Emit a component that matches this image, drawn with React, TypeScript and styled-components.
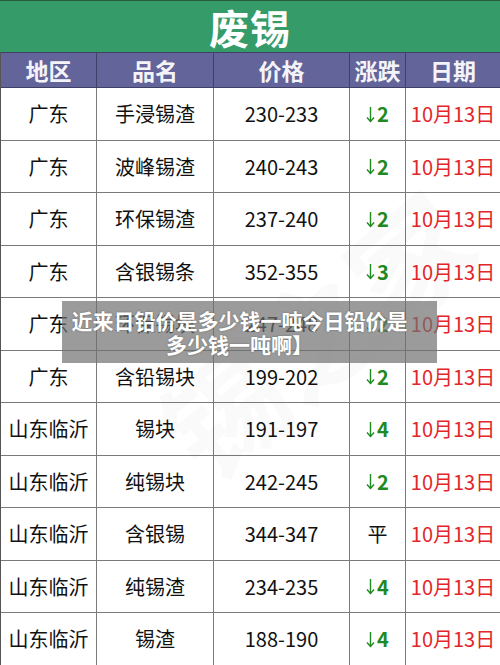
import React from "react";
import styled, { createGlobalStyle } from "styled-components";

const GlobalStyle = createGlobalStyle`
  html, body {
    margin: 0;
    padding: 0;
    background: #ffffff;
  }
`;

const FONT = `"Noto Sans CJK SC", "Noto Sans", sans-serif`;

const Page = styled.div`
  position: relative;
  width: 500px;
  height: 665px;
  overflow: hidden;
  font-family: ${FONT};
  background: #fff;
`;

const TitleBar = styled.div`
  height: 51px;
  background: #349b69;
  border-top: 1px solid #2a5a3e;
  display: flex;
  align-items: center;
  justify-content: center;
  color: #ffffff;
  font-size: 40px;
  font-weight: 700;
  letter-spacing: 1px;
  line-height: 50px;
`;

const Grid = styled.div`
  display: grid;
  grid-template-columns: 96px 117px 136px 56px 95px;
  border-left: 1px solid #555;
`;

const HeadCell = styled.div`
  height: 36px;
  box-sizing: border-box;
  background: #62649a;
  color: #f4f4f8;
  font-size: 23px;
  font-weight: 700;
  display: flex;
  align-items: center;
  justify-content: center;
  border-top: 1px solid #3f4066;
  border-right: 1px solid #3f4066;
  border-bottom: 1px solid #3f4066;
`;

const Cell = styled.div<{ $tone?: "down" | "date" | "flat" }>`
  height: 52.5px;
  box-sizing: border-box;
  border-right: 1px solid #7a7a7a;
  border-bottom: 1px solid #7a7a7a;
  display: flex;
  align-items: center;
  justify-content: center;
  font-size: 20px;
  color: ${(p) =>
    p.$tone === "down" ? "#1f8a22" : p.$tone === "date" ? "#e3262a" : "#111"};
  font-weight: ${(p) => (p.$tone === "down" ? 700 : 400)};
  white-space: nowrap;
`;

const ArrowIcon = styled.svg`
  width: 9px;
  height: 17px;
  margin-right: 2px;
  margin-top: 1px;
`;

const Watermark = styled.div`
  position: absolute;
  left: 120px;
  top: 380px;
  font-size: 120px;
  font-weight: 700;
  color: rgba(0, 0, 0, 0.018);
  transform: rotate(-40deg);
  transform-origin: left top;
  white-space: nowrap;
  pointer-events: none;
`;

const Overlay = styled.div`
  position: absolute;
  left: 62px;
  top: 301px;
  width: 375px;
  height: 62px;
  box-sizing: border-box;
  padding-right: 20px;
  background: rgba(112, 112, 112, 0.7);
  color: #fff;
  font-size: 21px;
  font-weight: 700;
  line-height: 24px;
  text-align: center;
  display: flex;
  flex-direction: column;
  align-items: center;
  justify-content: center;
  text-shadow: 0 0 2px rgba(0, 0, 0, 0.35);
  white-space: nowrap;
`;

type Row = [string, string, string, string, string];

const rows: Row[] = [
  ["广东", "手浸锡渣", "230-233", "↓2", "10月13日"],
  ["广东", "波峰锡渣", "240-243", "↓2", "10月13日"],
  ["广东", "环保锡渣", "237-240", "↓2", "10月13日"],
  ["广东", "含银锡条", "352-355", "↓3", "10月13日"],
  ["广东", "环保锡块", "247-248", "↓2", "10月13日"],
  ["广东", "含铅锡块", "199-202", "↓2", "10月13日"],
  ["山东临沂", "锡块", "191-197", "↓4", "10月13日"],
  ["山东临沂", "纯锡块", "242-245", "↓2", "10月13日"],
  ["山东临沂", "含银锡", "344-347", "平", "10月13日"],
  ["山东临沂", "纯锡渣", "234-235", "↓4", "10月13日"],
  ["山东临沂", "锡渣", "188-190", "↓4", "10月13日"],
];

const headers = ["地区", "品名", "价格", "涨跌", "日期"];

const DownArrow = () => (
  <ArrowIcon viewBox="0 0 9 17" fill="none" stroke="currentColor" strokeWidth="1.4">
    <path d="M4.5 1 V15.5" />
    <path d="M1 11.5 L4.5 15.5 L8 11.5" />
  </ArrowIcon>
);

const Change = ({ value }: { value: string }) => {
  if (value.startsWith("↓"))
    return (
      <Cell $tone="down">
        <DownArrow />
        {value.slice(1)}
      </Cell>
    );
  return <Cell $tone="flat">{value}</Cell>;
};

export default function App() {
  return (
    <Page>
      <GlobalStyle />
      <TitleBar>废锡</TitleBar>
      <Grid>
        {headers.map((h) => (
          <HeadCell key={h}>{h}</HeadCell>
        ))}
        {rows.map((r, i) => (
          <React.Fragment key={i}>
            <Cell>{r[0]}</Cell>
            <Cell>{r[1]}</Cell>
            <Cell>{r[2]}</Cell>
            <Change value={r[3]} />
            <Cell $tone="date">{r[4]}</Cell>
          </React.Fragment>
        ))}
      </Grid>
      <Watermark>锡之家</Watermark>
      <Overlay>
        <span>近来日铅价是多少钱一吨今日铅价是</span>
        <span>多少钱一吨啊】</span>
      </Overlay>
    </Page>
  );
}
